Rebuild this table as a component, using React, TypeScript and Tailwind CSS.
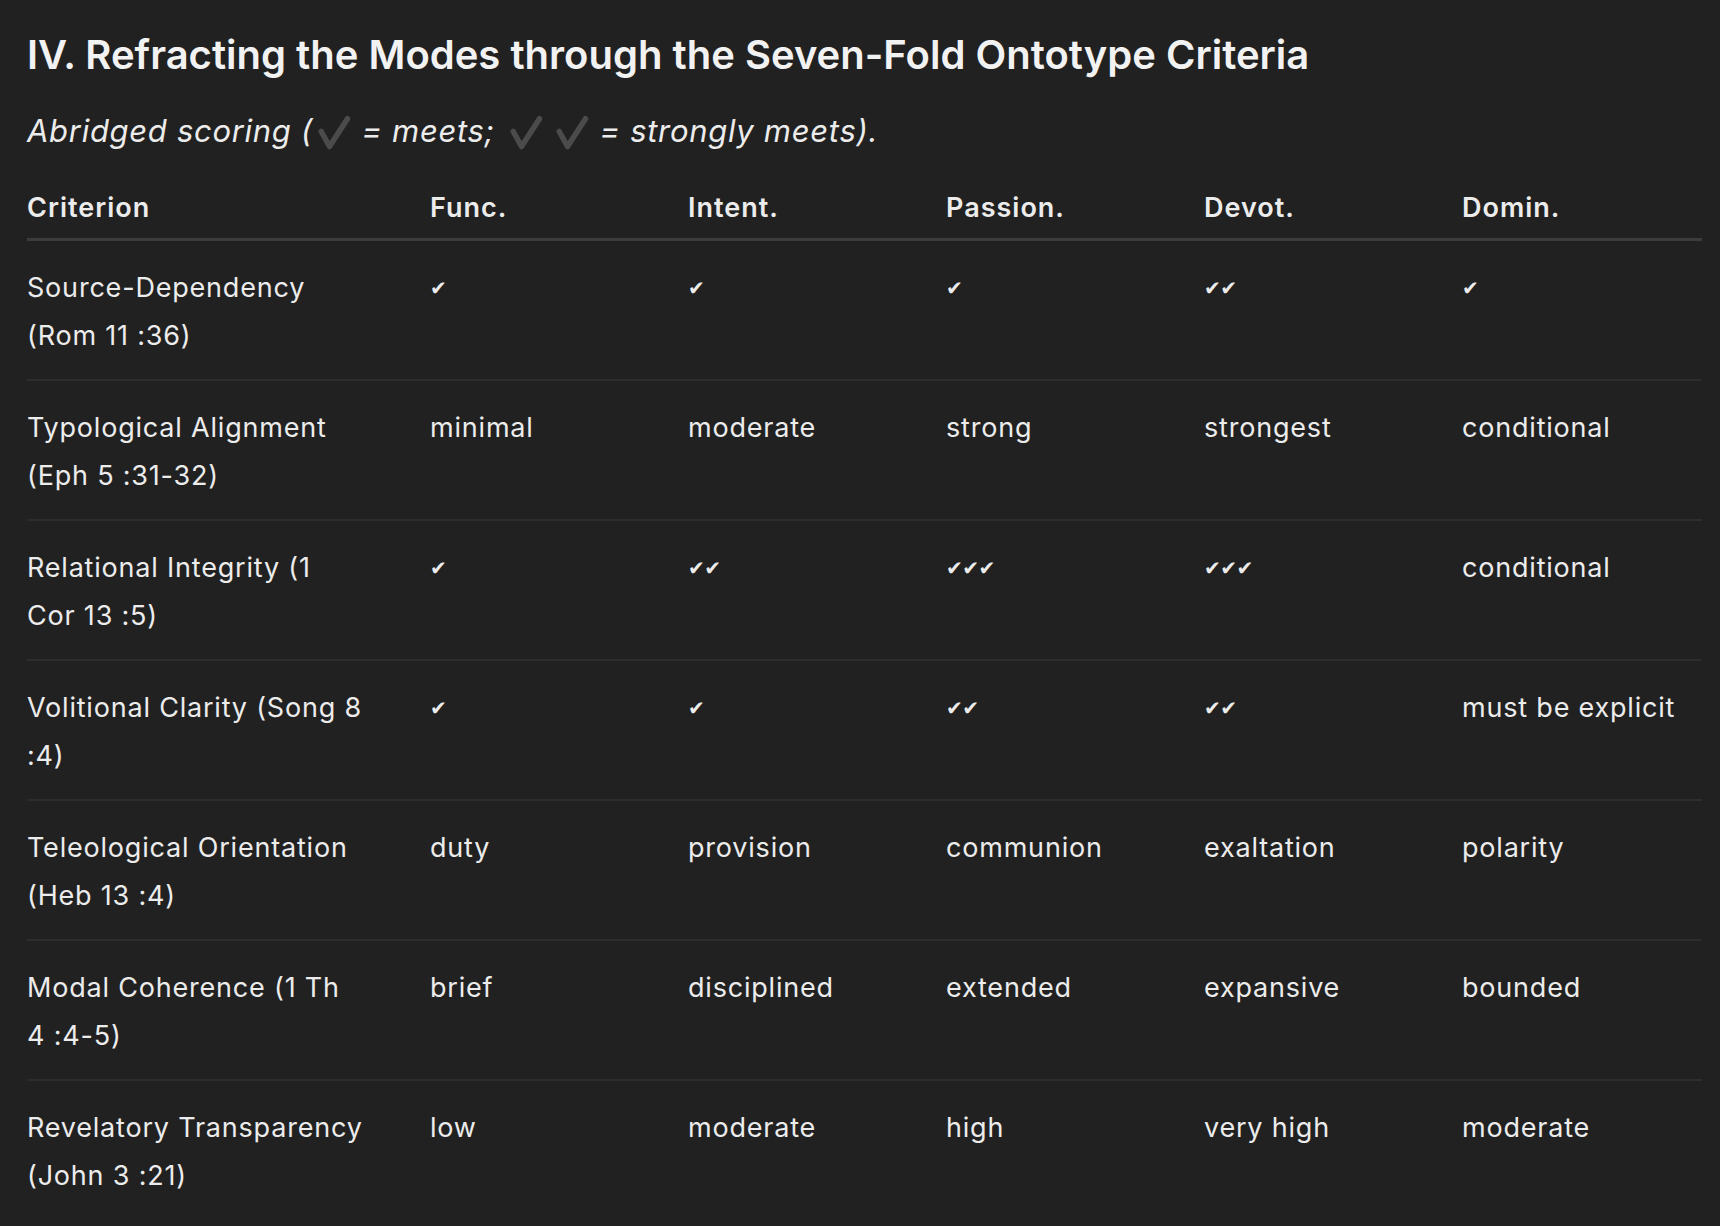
import React from "react";

const Check = ({ className = "" }: { className?: string }) => (
  <svg width="36" height="36" viewBox="0 0 24 24" className={"inline-block align-[-9px] " + className} aria-hidden>
    <path d="M3.5 11 L9 21 L21 2.5" fill="none" stroke="#4b4b4b" strokeWidth="3.7" strokeLinecap="round" strokeLinejoin="round" />
  </svg>
);

type Row = { c: [string, string]; v: string[] };

const rows: Row[] = [
  { c: ["Source-Dependency", "(Rom 11 :36)"], v: ["✔", "✔", "✔", "✔✔", "✔"] },
  { c: ["Typological Alignment", "(Eph 5 :31-32)"], v: ["minimal", "moderate", "strong", "strongest", "conditional"] },
  { c: ["Relational Integrity (1", "Cor 13 :5)"], v: ["✔", "✔✔", "✔✔✔", "✔✔✔", "conditional"] },
  { c: ["Volitional Clarity (Song 8", ":4)"], v: ["✔", "✔", "✔✔", "✔✔", "must be explicit"] },
  { c: ["Teleological Orientation", "(Heb 13 :4)"], v: ["duty", "provision", "communion", "exaltation", "polarity"] },
  { c: ["Modal Coherence (1 Th", "4 :4-5)"], v: ["brief", "disciplined", "extended", "expansive", "bounded"] },
  { c: ["Revelatory Transparency", "(John 3 :21)"], v: ["low", "moderate", "high", "very high", "moderate"] },
];

const Cell = ({ v }: { v: string }) =>
  v.startsWith("✔") ? (
    <span className="inline-block -translate-y-[2px] font-['DejaVu_Sans',sans-serif] text-[20px] tracking-[-0.5px]">{v}</span>
  ) : (
    <span>{v}</span>
  );

export default function App() {
  return (
    <div className="min-h-screen bg-[#212121] text-[#ececec] font-['Inter',sans-serif] pl-[27px] pr-[18px] pt-[31px] pb-[10px]">
      <h1 className="text-[40px] leading-[48px] font-semibold text-[#f2f2f2]">
        IV. Refracting the Modes through the Seven-Fold Ontotype Criteria
      </h1>
      <p className="mt-[32px] text-[31px] leading-[40px] italic tracking-[0.7px]">
        Abridged scoring (<Check className="ml-[3px]" /> = meets; <Check className="ml-[4px]" /><Check className="ml-[10px]" /> = strongly meets).
      </p>
      <table className="mt-[33px] w-full table-fixed border-collapse text-[27px] leading-[48px] tracking-[0.8px]">
        <colgroup>
          <col className="w-[403px]" />
          <col className="w-[258px]" />
          <col className="w-[258px]" />
          <col className="w-[258px]" />
          <col className="w-[258px]" />
          <col />
        </colgroup>
        <thead>
          <tr className="border-b-[3px] border-[#3c3c3c]">
            {["Criterion", "Func.", "Intent.", "Passion.", "Devot.", "Domin."].map((h) => (
              <th key={h} className="text-left font-semibold tracking-[1px] pb-[6px] p-0">
                {h}
              </th>
            ))}
          </tr>
        </thead>
        <tbody>
          {rows.map((r, i) => (
            <tr key={i} className={i < rows.length - 1 ? "border-b-2 border-[#2d2d2d]" : ""}>
              <td className="align-top pt-[23px] pb-[19px]">
                <span className="block">{r.c[0]}</span>
                <span className="block">{r.c[1]}</span>
              </td>
              {r.v.map((v, j) => (
                <td key={j} className="align-top pt-[23px] pb-[19px] whitespace-nowrap">
                  <Cell v={v} />
                </td>
              ))}
            </tr>
          ))}
        </tbody>
      </table>
    </div>
  );
}
